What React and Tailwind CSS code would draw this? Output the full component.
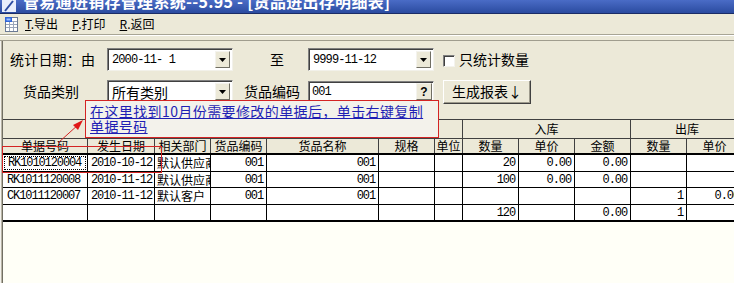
import React from 'react';

const cjk = "font-['Noto_Sans_CJK_SC','Noto_Sans',sans-serif]";
const mono = "font-['Liberation_Mono',monospace]";

const DropArrow = () => (
  <svg width="7" height="4" viewBox="0 0 7 4">
    <path d="M0 0h7L3.5 4z" fill="#000" />
  </svg>
);

const Combo = ({ value, latin }) => (
  <div className="w-[126px] h-[23px] flex bg-white border border-t-[#808080] border-l-[#808080] border-r-[#f2f1ea] border-b-[#f2f1ea] shadow-[inset_1px_1px_0_#404040]">
    <div className={`flex-1 flex items-center pl-[4px] pt-[1px] overflow-hidden whitespace-nowrap ${latin ? `${mono} text-[12px] tracking-[-0.9px]` : 'text-[14px]'}`}>
      {value}
    </div>
    <div className="w-[15px] my-[2px] mr-[2px] flex items-center justify-center bg-[#ece9d8] border border-t-[#f4f3ee] border-l-[#f4f3ee] border-r-[#716f64] border-b-[#716f64]">
      <DropArrow />
    </div>
  </div>
);

const cols = 'grid grid-cols-[85px_67px_56px_56px_112px_56px_28px_56px_56px_56px_56px_56px]';

const headers = ['单据号码', '发生日期', '相关部门', '货品编码', '货品名称', '规格', '单位', '数量', '单价', '金额', '数量', '单价'];

// r = right aligned number, t = text, id / d = left aligned codes and dates
const rows = [
  [['RK1010120004', 'id'], ['2010-10-12', 'd'], ['默认供应商', 't'], ['001', 'r'], ['001', 'r'], ['', 'r'], ['', 'r'], ['20', 'r'], ['0.00', 'r'], ['0.00', 'r'], ['', 'r'], ['', 'r']],
  [['RK1011120008', 'id'], ['2010-11-12', 'd'], ['默认供应商', 't'], ['001', 'r'], ['001', 'r'], ['', 'r'], ['', 'r'], ['100', 'r'], ['0.00', 'r'], ['0.00', 'r'], ['', 'r'], ['', 'r']],
  [['CK1011120007', 'id'], ['2010-11-12', 'd'], ['默认客户', 't'], ['001', 'r'], ['001', 'r'], ['', 'r'], ['', 'r'], ['', 'r'], ['', 'r'], ['', 'r'], ['1', 'r'], ['0.00', 'r']],
  [['', 'id'], ['', 'd'], ['', 't'], ['', 'r'], ['', 'r'], ['', 'r'], ['', 'r'], ['120', 'r'], ['', 'r'], ['0.00', 'r'], ['1', 'r'], ['', 'r']],
];

const rowHeights = ['h-[17px]', 'h-[16px]', 'h-[17px]', 'h-[17px]'];

const Cell = ({ value, kind, focus }) => {
  const base = 'border-r border-black overflow-hidden whitespace-nowrap flex items-center';
  const num = `${mono} text-[12px] tracking-[-1.1px]`;
  if (kind === 't') return <div className={`${base} pl-[2px] text-[12px] ${cjk}`}>{value}</div>;
  if (kind === 'r') return <div className={`${base} justify-end pr-[3px] ${num}`}>{value}</div>;
  if (kind === 'd') return <div className={`${base} pl-[3px] ${num}`}>{value}</div>;
  return (
    <div className={`${base} p-[1px]`}>
      <div className={`flex-1 h-full flex items-center pl-[3px] ${num} ${focus ? 'border border-dotted border-black' : ''}`}>
        {value}
      </div>
    </div>
  );
};

const App = () => {
  return (
    <div className={`relative w-[734px] h-[283px] overflow-hidden bg-[#ece9d8] text-black ${cjk}`}>
      {/* title bar */}
      <div className="h-[14px] flex items-start overflow-hidden bg-gradient-to-b from-[#4a6cc6] to-[#2b4ba0] border-b border-[#1a2c66]">
        <svg width="18" height="13" viewBox="0 0 18 13" className="ml-[1px] shrink-0">
          <rect x="1" y="0" width="14" height="12" fill="#e8eefc" />
          <path d="M4 11L12 1" stroke="#2b4ba0" strokeWidth="2" />
        </svg>
        <div className="ml-[4px] -mt-[7px] text-[16px] leading-none font-bold text-white whitespace-nowrap tracking-[0.3px]">
          管易通进销存管理系统--5.95 - [货品进出存明细表]
        </div>
      </div>

      {/* menu bar */}
      <div className="h-[20px] flex items-center text-[12px]">
        <svg width="15" height="16" viewBox="0 0 15 16" className="ml-[4px]">
          <rect x="1.5" y="1.5" width="12" height="14" fill="#fff" stroke="#6b7a94" />
          <path d="M2 5.5h11M2 8.5h11M2 11.5h11M5.5 5v10M9.5 5v10" stroke="#9aa6ba" />
          <rect x="1" y="1" width="7" height="5" fill="#2f64d8" />
          <rect x="2.5" y="2.5" width="4" height="2" fill="#9cc0ff" />
        </svg>
        <span className="ml-[6px]"><span className="underline">T</span>.导出</span>
        <span className="ml-[14px]"><span className="underline">P</span>.打印</span>
        <span className="ml-[14px]"><span className="underline">R</span>.返回</span>
      </div>
      <div className="h-[2px] border-t border-[#a8a595] border-b border-b-white" />
      <div className="h-[4px]" />

      {/* main panel */}
      <div className="flex h-[243px] border-t border-[#a09d8e]">
        <div className="w-[3px] shrink-0 bg-[#b9b5a6] border-l border-[#f4f3ee] border-r border-r-[#716f64]" />
        <div className="flex-1 flex flex-col min-w-0">
          {/* filter form */}
          <div className="h-[78px] pt-[7px]">
            <div className="flex items-center h-[23px]">
              <div className="w-[104px] pl-[7px] text-[14px] tracking-[0.2px]">统计日期：由</div>
              <Combo value="2000-11- 1" latin />
              <div className="w-[75px] pl-[37px] text-[14px]">至</div>
              <Combo value="9999-11-12" latin />
              <div className="ml-[9px] w-[12px] h-[12px] mt-[3px] bg-white border border-t-[#808080] border-l-[#808080] border-r-[#f4f3ee] border-b-[#f4f3ee] shadow-[inset_1px_1px_0_#404040]" />
              <div className="ml-[4px] text-[14px]">只统计数量</div>
            </div>
            <div className="flex items-center h-[23px] mt-[9px]">
              <div className="w-[104px] pl-[20px] text-[14px]">货品类别</div>
              <Combo value="所有类别" />
              <div className="w-[75px] pl-[11px] text-[14px]">货品编码</div>
              <div className="w-[126px] h-[21px] flex bg-white border border-t-[#808080] border-l-[#808080] border-r-[#f2f1ea] border-b-[#f2f1ea] shadow-[inset_1px_1px_0_#404040]">
                <div className={`flex-1 flex items-center pl-[3px] pt-[1px] ${mono} text-[12px] tracking-[-0.9px]`}>001</div>
                <div className="w-[16px] my-[1px] mr-[1px] flex items-center justify-center bg-[#ece9d8] border border-t-[#f4f3ee] border-l-[#f4f3ee] border-r-[#716f64] border-b-[#716f64] text-[12px] font-bold font-['Liberation_Sans',sans-serif]">
                  ?
                </div>
              </div>
              <div className="ml-[9px] w-[88px] h-[24px] flex items-center justify-center bg-[#ece9d8] border border-t-white border-l-white border-r-[#404040] border-b-[#404040] shadow-[inset_-1px_-1px_0_#9d9a8c] text-[14px]">
                生成报表↓
              </div>
            </div>
          </div>

          {/* grid */}
          <div className="bg-white overflow-hidden">
            <div className={`${cols} h-[20px] bg-[#ece9d8] border-t border-b border-[#404040] text-[12px]`}>
              <div className="col-span-7 border-r border-[#404040]" />
              <div className="col-span-3 border-r border-[#404040] flex items-center justify-center">入库</div>
              <div className="col-span-2 flex items-center justify-center">出库</div>
            </div>
            <div className={`${cols} h-[16px] bg-[#ece9d8] border-b-2 border-black text-[12px]`}>
              {headers.map((h, i) => (
                <div key={i} className="border-r border-[#404040] flex items-center justify-center overflow-hidden whitespace-nowrap leading-none">
                  {h}
                </div>
              ))}
            </div>
            {rows.map((r, ri) => (
              <div key={ri} className={`${cols} ${rowHeights[ri]} border-b border-black ${ri === 3 ? 'border-b-2' : ''}`}>
                {r.map(([v, k], ci) => (
                  <Cell key={ci} value={v} kind={k} focus={ri === 0 && ci === 0} />
                ))}
              </div>
            ))}
          </div>
          <div className="flex-1 bg-[#fffff7]" />
        </div>
      </div>

      {/* annotation overlays */}
      <div className="absolute left-[85px] top-[100px] w-[354px] h-[38px] border border-[#d42424] bg-[#f3f2eb] pl-[4px] pt-[3px] text-[14px] leading-[15px] text-[#1f1fb4] underline tracking-[0.4px]">
        <div>在这里找到10月份需要修改的单据后，单击右键复制</div>
        <div>单据号码</div>
      </div>
      <div className="absolute left-[2px] top-[146px] w-[160px] h-[27px] border border-[#d42424]" />
      <svg className="absolute left-[50px] top-[112px]" width="40" height="36" viewBox="0 0 40 36">
        <path d="M8 31L29 12" stroke="#d42424" strokeWidth="1" />
        <path d="M33 8L23 13L28 18z" fill="#e01818" />
      </svg>
    </div>
  );
};

export default App;
